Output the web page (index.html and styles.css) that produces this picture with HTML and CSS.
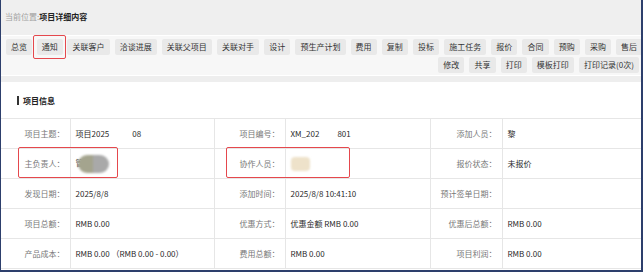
FILE: index.html
```html
<!DOCTYPE html>
<html lang="zh-CN">
<head>
    <meta charset="UTF-8">
    <meta name="viewport" content="width=device-width, initial-scale=1.0">
    <title>项目详细内容</title>
    <link rel="stylesheet" href="styles.css">
</head>
<body>
<div class="frame">
    <div class="crumb">
        <span class="crumb-label">当前位置:</span><span class="crumb-page">项目详细内容</span>
    </div>

    <div class="toolbar">
        <div class="tool-row">
            <button class="btn">总览</button>
            <span class="marked"><button class="btn">通知</button></span>
            <button class="btn">关联客户</button>
            <button class="btn">洽谈进展</button>
            <button class="btn">关联父项目</button>
            <button class="btn">关联对手</button>
            <button class="btn">设计</button>
            <button class="btn">预生产计划</button>
            <button class="btn">费用</button>
            <button class="btn">复制</button>
            <button class="btn">投标</button>
            <button class="btn">施工任务</button>
            <button class="btn">报价</button>
            <button class="btn">合同</button>
            <button class="btn">预购</button>
            <button class="btn">采购</button>
            <button class="btn">售后</button>
        </div>
        <div class="tool-row tool-row-right">
            <button class="btn">修改</button>
            <button class="btn">共享</button>
            <button class="btn">打印</button>
            <button class="btn">模板打印</button>
            <button class="btn">打印记录(0次)</button>
        </div>
    </div>
    <div class="band"></div>

    <div class="content">
        <div class="sec-title">项目信息</div>
        <div class="info-wrap">
            <table class="info">
                <colgroup>
                    <col style="width:69px">
                    <col style="width:144px">
                    <col style="width:71px">
                    <col style="width:145px">
                    <col style="width:72px">
                    <col style="width:139px">
                </colgroup>
                <tr>
                    <th>项目主题：</th>
                    <td>项目2025<span class="hidden-part"></span>08</td>
                    <th>项目编号：</th>
                    <td>XM_202<span class="hidden-part wide"></span>801</td>
                    <th>添加人员：</th>
                    <td>黎</td>
                </tr>
                <tr>
                    <th>主负责人：</th>
                    <td><span class="blur-name">管</span><span class="blob blob-gray"></span></td>
                    <th>协作人员：</th>
                    <td><span class="blob blob-beige"></span></td>
                    <th>报价状态：</th>
                    <td>未报价</td>
                </tr>
                <tr>
                    <th>发现日期：</th>
                    <td>2025/8/8</td>
                    <th>添加时间：</th>
                    <td>2025/8/8 10:41:10</td>
                    <th>预计签单日期：</th>
                    <td></td>
                </tr>
                <tr>
                    <th>项目总额：</th>
                    <td>RMB 0.00</td>
                    <th>优惠方式：</th>
                    <td>优惠金额 RMB 0.00</td>
                    <th>优惠后总额：</th>
                    <td>RMB 0.00</td>
                </tr>
                <tr>
                    <th>产品成本：</th>
                    <td>RMB 0.00 （RMB 0.00 - 0.00）</td>
                    <th>费用总额：</th>
                    <td>RMB 0.00</td>
                    <th>项目利润：</th>
                    <td>RMB 0.00</td>
                </tr>
            </table>
            <!-- annotation boxes drawn over the table -->
            <div class="mark-box box-owner"></div>
            <div class="mark-box box-team"></div>
        </div>
    </div>
</div>
</body>
</html>
```

FILE: styles.css
```css
body {
    margin: 0;
    background: #fff;
    font-family: "Noto Sans CJK SC", "Noto Sans", sans-serif;
    font-size: 8px;
    color: #333;
}

.frame {
    width: 643px;
    height: 272px;
    box-sizing: border-box;
    border-left: 1px solid #2d3f6c;
    border-right: 2px solid #2d3f6c;
    border-bottom: 2px solid #2d3f6c;
    overflow: hidden;
}

.crumb {
    height: 35px;
    line-height: 34px;
    padding-left: 4px;
    background: #efefef;
    border-bottom: 1px solid #fff;
}

.crumb-label {
    color: #a0a0a0;
}

.crumb-page {
    font-weight: bold;
    color: #222;
}

.toolbar {
    height: 40px;
    box-sizing: border-box;
    padding: 3px 2px 0 5px;
    background: #f7f7f7;
    border-bottom: 1px solid #fff;
}

.tool-row {
    display: flex;
    gap: 5px;
    white-space: nowrap;
}

.tool-row-right {
    justify-content: flex-end;
    margin-top: 2px;
}

.btn {
    flex: none;
    height: 16px;
    padding: 0 5.1px;
    border: none;
    border-radius: 2px;
    background: #e9e9e9;
    font-family: inherit;
    font-size: 8px;
    color: #333;
    line-height: 16px;
}

/* red annotation round the notice button, kept out of the flow width */
.marked {
    display: flex;
    flex: none;
    margin: -4px;
    padding: 2.5px;
    border: 1.5px solid #e5484d;
    border-radius: 2px;
}

.band {
    height: 6px;
    background: #eeeeee;
}

.content {
    padding-top: 11px;
}

.sec-title {
    margin-left: 16px;
    padding-left: 4px;
    border-left: 2px solid #333;
    height: 9px;
    line-height: 9px;
    margin-top: 3px;
    font-weight: bold;
    color: #222;
}

.info-wrap {
    position: relative;
    margin-top: 13px;
}

.info {
    width: 640px;
    table-layout: fixed;
    border-collapse: collapse;
}

.info th,
.info td {
    height: 29px;
    padding: 0;
    border: 1px solid #e6e6e6;
    font-weight: normal;
    white-space: nowrap;
    overflow: hidden;
}

.info tr > :first-child {
    border-left: none;
}

.info tr > :last-child {
    border-right: none;
}

.info th {
    text-align: right;
    padding-right: 5px;
    color: #777;
}

.info td {
    text-align: left;
    padding-left: 5px;
    color: #2a2a2a;
}

.hidden-part {
    display: inline-block;
    width: 23px;
}

.hidden-part.wide {
    width: 18px;
}

.blur-name {
    color: #555;
}

.blob {
    display: inline-block;
    vertical-align: middle;
    filter: blur(0.8px);
}

.blob-gray {
    width: 31px;
    height: 18px;
    margin-left: -6px;
    border-radius: 9px;
    background: linear-gradient(90deg, #a4a48e 50%, #a9a9a9 50%);
}

.blob-beige {
    width: 19px;
    height: 14px;
    border-radius: 4px;
    background: #eee2ca;
}

.mark-box {
    position: absolute;
    top: 29px;
    height: 31px;
    box-sizing: border-box;
    border: 1.5px solid #e5484d;
    border-radius: 2px;
}

.box-owner {
    left: 17px;
    width: 100px;
}

.box-team {
    left: 225px;
    width: 124px;
}
```
